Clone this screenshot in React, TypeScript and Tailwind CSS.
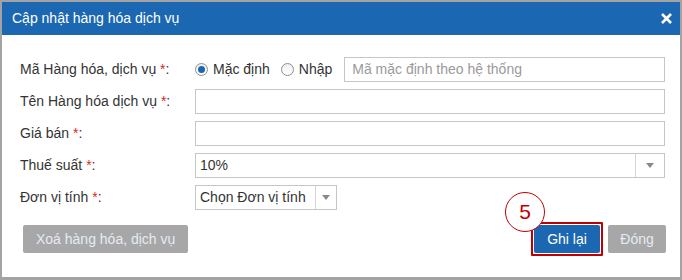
import React from 'react';

const Req = () => <span className="text-[#e0251b]">*</span>;

const Label: React.FC<{ text: string }> = ({ text }) => (
  <div className="w-[193px] shrink-0 pl-[18px] text-[14px] text-[#333]">
    {text} <Req />:
  </div>
);

const Radio: React.FC<{ checked?: boolean; label: string }> = ({ checked, label }) => (
  <label className="flex items-center gap-[5px] text-[14px] text-[#333]">
    <span className="flex h-[13px] w-[13px] items-center justify-center rounded-full border border-[#8f8f8f] bg-gradient-to-b from-[#f0f0f0] to-white">
      {checked && <span className="h-[7px] w-[7px] rounded-full bg-[#1c66b8]" />}
    </span>
    {label}
  </label>
);

const Caret = () => (
  <svg width="8" height="5" viewBox="0 0 8 5">
    <path d="M0 0h8L4 5z" fill="#888" />
  </svg>
);

export default function App() {
  return (
    <div className="h-[280px] w-[682px] bg-[#a3a3a3] pt-[2px] pl-[2px]" style={{ fontFamily: '"Liberation Sans", Arial, sans-serif' }}>
      <div className="h-[275px] w-[678px] bg-white">
        {/* header */}
        <div className="flex h-[33px] items-center justify-between bg-[#1b67b1] pl-[10px] pr-[8px] text-white">
          <span className="text-[14px]">Cập nhật hàng hóa dịch vụ</span>
          <svg width="11" height="11" viewBox="0 0 11 11">
            <path d="M1 1l9 9M10 1l-9 9" stroke="white" strokeWidth="2.6" />
          </svg>
        </div>

        <div className="flex flex-col gap-[7px] pt-[22px] pr-[15px]">
          <div className="flex h-[25px] items-center">
            <Label text="Mã Hàng hóa, dịch vụ" />
            <div className="flex items-center gap-[11px]">
              <Radio checked label="Mặc định" />
              <Radio label="Nhập" />
            </div>
            <div className="ml-[12px] flex h-[25px] flex-1 items-center border border-[#c6c6c6] px-[7px] text-[14px] text-[#9a9a9a]">
              Mã mặc định theo hệ thống
            </div>
          </div>

          <div className="flex h-[25px] items-center">
            <Label text="Tên Hàng hóa dịch vụ" />
            <div className="h-[25px] flex-1 border border-[#c6c6c6]" />
          </div>

          <div className="flex h-[25px] items-center">
            <Label text="Giá bán" />
            <div className="h-[25px] flex-1 border border-[#c6c6c6]" />
          </div>

          <div className="flex h-[25px] items-center">
            <Label text="Thuế suất" />
            <div className="flex h-[25px] flex-1 items-center border border-[#c6c6c6] text-[14px] text-[#333]">
              <span className="flex-1 pl-[4px]">10%</span>
              <span className="flex h-full w-[29px] items-center justify-center border-l border-[#d6d6d6]">
                <Caret />
              </span>
            </div>
          </div>

          <div className="flex h-[25px] items-center">
            <Label text="Đơn vị tính" />
            <div className="flex h-[25px] w-[142px] items-center border border-[#c6c6c6] text-[14px] text-[#333]">
              <span className="flex-1 whitespace-nowrap pl-[4px]">Chọn Đơn vị tính</span>
              <span className="flex h-full w-[21px] shrink-0 items-center justify-center border-l border-[#d6d6d6]">
                <Caret />
              </span>
            </div>
          </div>
        </div>

        {/* footer */}
        <div className="flex items-center justify-between pt-[12px] pl-[21px] pr-[14px]">
          <button className="h-[28px] rounded-[2px] bg-[#a7a7a7] px-[13px] text-[14px] text-[#e4ebf4]">
            Xoá hàng hóa, dịch vụ
          </button>
          <div className="relative flex items-center gap-[5px]">
            <div className="rounded-[1px] border-[2px] border-[#c00000] p-[1px]">
              <button className="h-[28px] w-[66px] rounded-[2px] bg-[#1b67b1] text-[14px] text-white">Ghi lại</button>
            </div>
            <button className="h-[28px] w-[58px] rounded-[2px] bg-[#a7a7a7] text-[14px] text-[#e4ebf4]">Đóng</button>
            <div className="absolute left-[-26px] top-[-30px] flex h-[40px] w-[40px] items-center justify-center rounded-full border-[1.5px] border-[#c00000] bg-white text-[21px] text-[#c00000]">
              5
            </div>
          </div>
        </div>
      </div>
    </div>
  );
}
